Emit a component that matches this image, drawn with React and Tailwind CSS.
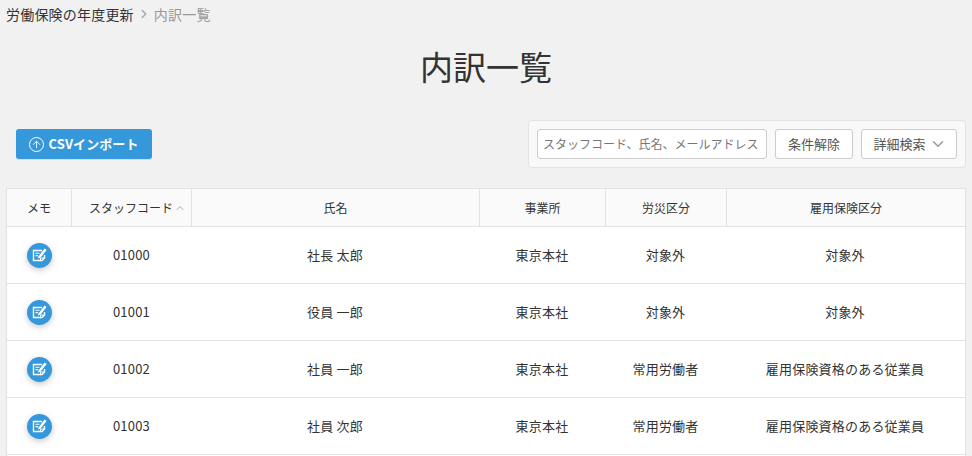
import { ChevronRight, ChevronDown, ChevronUp, ArrowUp } from "lucide-react";

const staff = [
  { code: "01000", name: "社長 太郎", office: "東京本社", accident: "対象外", employment: "対象外" },
  { code: "01001", name: "役員 一郎", office: "東京本社", accident: "対象外", employment: "対象外" },
  { code: "01002", name: "社員 一郎", office: "東京本社", accident: "常用労働者", employment: "雇用保険資格のある従業員" },
  { code: "01003", name: "社員 次郎", office: "東京本社", accident: "常用労働者", employment: "雇用保険資格のある従業員" },
];

const rowGrid = "grid grid-cols-[65px_120px_288px_126px_121px_1fr]";

function MemoIcon() {
  return (
    <button className="w-[25px] h-[25px] rounded-full bg-[#3498db] flex items-center justify-center shadow-[0_2px_6px_rgba(0,0,0,0.22)]">
      <svg width="17" height="17" viewBox="0 0 17 17" fill="none">
        <path d="M11 3.5H2.5V13.5H11L13.5 11V8" stroke="white" strokeWidth="1.4" />
        <path d="M4.5 6.2H8.5M4.5 8.6H7" stroke="white" strokeWidth="1.1" />
        <path d="M7.4 9.4L13.6 1.6L15.6 3.1L9.4 10.8L7 11.6Z" fill="white" />
        <path d="M9.5 13.5V11H13.5" stroke="white" strokeWidth="1" />
      </svg>
    </button>
  );
}

export default function App() {
  return (
    <div className="h-[456px] overflow-hidden bg-[#f1f1f1] text-[#333] font-['Noto_Sans_CJK_JP','Noto_Sans',sans-serif]">
      <nav className="flex items-center h-[28px] pl-[6px] text-[14px] tracking-[0.2px]">
        <span>労働保険の年度更新</span>
        <ChevronRight className="w-[14px] h-[14px] mx-[3px] text-[#aaa]" strokeWidth={2.6} />
        <span className="text-[#999]">内訳一覧</span>
      </nav>

      <h1 className="mt-[11px] h-[54px] text-center text-[33px] leading-[54px]">内訳一覧</h1>

      <div className="mt-[27px] flex items-start justify-between pl-[16px] pr-[6px]">
        <button className="mt-[9px] w-[136px] h-[30px] rounded-[3px] bg-[#3498db] text-white text-[13px] font-bold flex items-center justify-center gap-[4px] shadow-[0_1px_1px_rgba(0,0,0,0.1)]">
          <span className="w-[15px] h-[15px] rounded-full border border-white flex items-center justify-center">
            <ArrowUp className="w-[11px] h-[11px]" strokeWidth={2} />
          </span>
          <span className="tracking-[0.1px]">CSVインポート</span>
        </button>
        <div className="w-[438px] h-[48px] rounded-[4px] border border-[#e2e2e2] bg-[#f9f9f9] flex items-center gap-[8px] pl-[8px]">
          <div className="w-[230px] h-[30px] rounded-[3px] border border-[#ccc] bg-white text-[12px] text-[#777] flex items-center pl-[5px] whitespace-nowrap overflow-hidden">
            スタッフコード、氏名、メールアドレス
          </div>
          <button className="w-[78px] h-[30px] rounded-[3px] border border-[#ccc] bg-white text-[13px] text-[#555]">条件解除</button>
          <button className="w-[96px] h-[30px] rounded-[3px] border border-[#ccc] bg-white text-[13px] text-[#555] flex items-center justify-center gap-[3px] pl-[2px]">
            詳細検索
            <ChevronDown className="w-[18px] h-[18px] text-[#999]" />
          </button>
        </div>
      </div>

      <div className="mt-[20px] mx-[6px] h-[300px] border border-[#e2e2e2] bg-white text-[13px] tracking-[0.2px]">
        <div className={`${rowGrid} h-[38px] bg-[#fafafa] border-b border-[#e2e2e2] text-[12px] tracking-normal`}>
          <div className="flex items-center justify-center border-r border-[#e2e2e2]">メモ</div>
          <div className="flex items-center justify-center border-r border-[#e2e2e2] pl-[12px]">
            スタッフコード
            <ChevronUp className="w-[12px] h-[12px] ml-[1px] text-[#aaa]" />
          </div>
          <div className="flex items-center justify-center border-r border-[#e2e2e2]">氏名</div>
          <div className="flex items-center justify-center border-r border-[#e2e2e2]">事業所</div>
          <div className="flex items-center justify-center border-r border-[#e2e2e2]">労災区分</div>
          <div className="flex items-center justify-center">雇用保険区分</div>
        </div>
        {staff.map((row) => (
          <div key={row.code} className={`${rowGrid} h-[57px] border-b border-[#e2e2e2] items-center text-center`}>
            <div className="flex justify-center pr-[1px]"><MemoIcon /></div>
            <div className="pr-[1px]">{row.code}</div>
            <div className="pr-[2px]">{row.name}</div>
            <div className="pr-[2px]">{row.office}</div>
            <div className="pr-[2px]">{row.accident}</div>
            <div className="pr-[2px]">{row.employment}</div>
          </div>
        ))}
      </div>
    </div>
  );
}
